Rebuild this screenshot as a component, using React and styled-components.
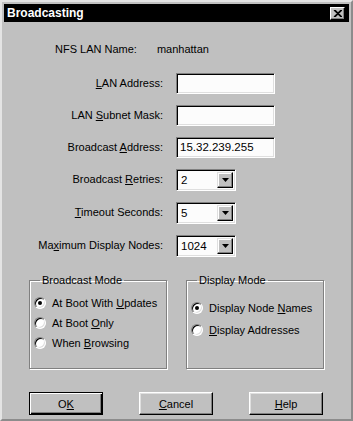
import React from "react";
import styled, { createGlobalStyle, css } from "styled-components";

const Global = createGlobalStyle`
  html, body { margin: 0; padding: 0; background: #ffffff; }
  * { box-sizing: border-box; }
`;

const Window = styled.div`
  width: 353px;
  height: 421px;
  background: #c0c0c0;
  border: 2px solid;
  border-color: #e4e4e4 #8c8c8c #8c8c8c #e4e4e4;
  padding: 2px;
  display: flex;
  flex-direction: column;
  font-family: "Liberation Sans", Arial, sans-serif;
  font-size: 11px;
  color: #000;
`;

const TitleBar = styled.div`
  height: 18px;
  background: #000;
  display: flex;
  align-items: center;
  justify-content: space-between;
  padding: 0 4px 0 3px;
`;

const Title = styled.span`
  color: #fff;
  font-weight: bold;
  font-size: 12px;
`;

const CloseButton = styled.div`
  width: 15px;
  height: 13px;
  background: #c0c0c0;
  border: 1px solid;
  border-color: #fff #000 #000 #fff;
  box-shadow: inset -1px -1px 0 #808080;
  display: flex;
  align-items: center;
  justify-content: center;
`;

const Body = styled.div`
  flex: 1;
  display: flex;
  flex-direction: column;
`;

const InfoRow = styled.div`
  display: flex;
  align-items: center;
  gap: 20px;
  height: 20px;
  margin: 17px 0 14px 51px;
`;

const FormGrid = styled.div`
  display: grid;
  grid-template-columns: 159px auto;
  column-gap: 13px;
  row-gap: 11px;
  align-items: center;
`;

const Label = styled.label`
  text-align: right;
  white-space: nowrap;
  padding-bottom: 2px;
`;

const Key = styled.span`
  text-decoration: underline;
`;

const sunken = css`
  border: 1px solid;
  border-color: #808080 #fff #fff #808080;
  box-shadow: inset 1px 1px 0 #000, inset -1px -1px 0 #dfdfdf;
`;

const TextBox = styled.div`
  width: 99px;
  height: 21px;
  background: #fcfcfc;
  ${sunken};
  padding: 3px 0 0 3px;
  font-size: 11.5px;
`;

const Combo = styled.div`
  width: 60px;
  height: 22px;
  background: #fcfcfc;
  ${sunken};
  display: flex;
  align-items: stretch;
  padding: 2px;
`;

const ComboValue = styled.span`
  flex: 1;
  padding: 2px 0 0 2px;
  font-size: 11.5px;
`;

const ArrowButton = styled.div`
  width: 16px;
  background: #c0c0c0;
  border: 1px solid;
  border-color: #dfdfdf #000 #000 #dfdfdf;
  box-shadow: inset -1px -1px 0 #808080, inset 1px 1px 0 #fff;
  display: flex;
  align-items: center;
  justify-content: center;
`;

const Groups = styled.div`
  display: flex;
  gap: 19px;
  margin: 16px 0 0 25px;
`;

const Group = styled.fieldset`
  width: 138px;
  height: 96px;
  margin: 0;
  border: 1px solid #808080;
  box-shadow: inset 1px 1px 0 #fff, 1px 1px 0 #fff;
  padding: ${(p) => p.$top}px 0 0 4px;
  display: flex;
  flex-direction: column;
  gap: ${(p) => p.$gap}px;
`;

const Legend = styled.legend`
  margin-left: 6px;
  padding: 0 2px;
  line-height: 14px;
`;

const Option = styled.div`
  display: flex;
  align-items: center;
  gap: 6px;
  height: 16px;
  white-space: nowrap;
`;

const RadioDot = styled.span`
  width: 12px;
  height: 12px;
  border-radius: 50%;
  background: #fff;
  border: 1px solid;
  border-color: #808080 #fff #fff #808080;
  box-shadow: inset 1px 1px 0 #000, inset -1px -1px 0 #dfdfdf;
  display: flex;
  align-items: center;
  justify-content: center;
  &::after {
    content: "";
    width: 4px;
    height: 4px;
    border-radius: 50%;
    background: ${(p) => (p.$checked ? "#000" : "transparent")};
  }
`;

const Buttons = styled.div`
  display: flex;
  gap: 36px;
  margin: 23px 0 0 25px;
`;

const Button = styled.div`
  width: 74px;
  height: 23px;
  background: #c0c0c0;
  display: flex;
  align-items: center;
  justify-content: center;
  border: 1px solid;
  border-color: #fff #000 #000 #fff;
  box-shadow: inset -1px -1px 0 #808080, inset 1px 1px 0 #dfdfdf;
  ${(p) =>
    p.$default &&
    css`
      border-color: #000;
      box-shadow: inset 1px 1px 0 #fff, inset -1px -1px 0 #000, inset -2px -2px 0 #808080;
    `}
`;

const DownArrow = () => (
  <svg width="7" height="4" viewBox="0 0 7 4">
    <path d="M0 0h7L3.5 4z" fill="#000" />
  </svg>
);

const CloseX = () => (
  <svg width="9" height="7" viewBox="0 0 9 7">
    <path d="M1 0L8 7M2 0L9 7M8 0L1 7M9 0L2 7" stroke="#000" strokeWidth="1.1" />
  </svg>
);

const Radio = ({ checked, children }) => (
  <Option>
    <RadioDot $checked={checked} />
    <span>{children}</span>
  </Option>
);

export default function App() {
  return (
    <>
      <Global />
      <Window>
        <TitleBar>
          <Title>Broadcasting</Title>
          <CloseButton>
            <CloseX />
          </CloseButton>
        </TitleBar>
        <Body>
          <InfoRow>
            <span>NFS LAN Name:</span>
            <span>manhattan</span>
          </InfoRow>
          <FormGrid>
            <Label>
              <Key>L</Key>AN Address:
            </Label>
            <TextBox />
            <Label>
              LAN <Key>S</Key>ubnet Mask:
            </Label>
            <TextBox />
            <Label>
              Broadcast <Key>A</Key>ddress:
            </Label>
            <TextBox>15.32.239.255</TextBox>
            <Label>
              Broadcast <Key>R</Key>etries:
            </Label>
            <Combo>
              <ComboValue>2</ComboValue>
              <ArrowButton>
                <DownArrow />
              </ArrowButton>
            </Combo>
            <Label>
              <Key>T</Key>imeout Seconds:
            </Label>
            <Combo>
              <ComboValue>5</ComboValue>
              <ArrowButton>
                <DownArrow />
              </ArrowButton>
            </Combo>
            <Label>
              Ma<Key>x</Key>imum Display Nodes:
            </Label>
            <Combo>
              <ComboValue>1024</ComboValue>
              <ArrowButton>
                <DownArrow />
              </ArrowButton>
            </Combo>
          </FormGrid>
          <Groups>
            <Group $top={8} $gap={4}>
              <Legend>Broadcast Mode</Legend>
              <Radio checked>
                At Boot With <Key>U</Key>pdates
              </Radio>
              <Radio>
                At Boot <Key>O</Key>nly
              </Radio>
              <Radio>
                When <Key>B</Key>rowsing
              </Radio>
            </Group>
            <Group $top={13} $gap={6}>
              <Legend>Display Mode</Legend>
              <Radio checked>
                Display Node <Key>N</Key>ames
              </Radio>
              <Radio>
                <Key>D</Key>isplay Addresses
              </Radio>
            </Group>
          </Groups>
          <Buttons>
            <Button $default>
              O<Key>K</Key>
            </Button>
            <Button>
              <Key>C</Key>ancel
            </Button>
            <Button>
              <Key>H</Key>elp
            </Button>
          </Buttons>
        </Body>
      </Window>
    </>
  );
}
